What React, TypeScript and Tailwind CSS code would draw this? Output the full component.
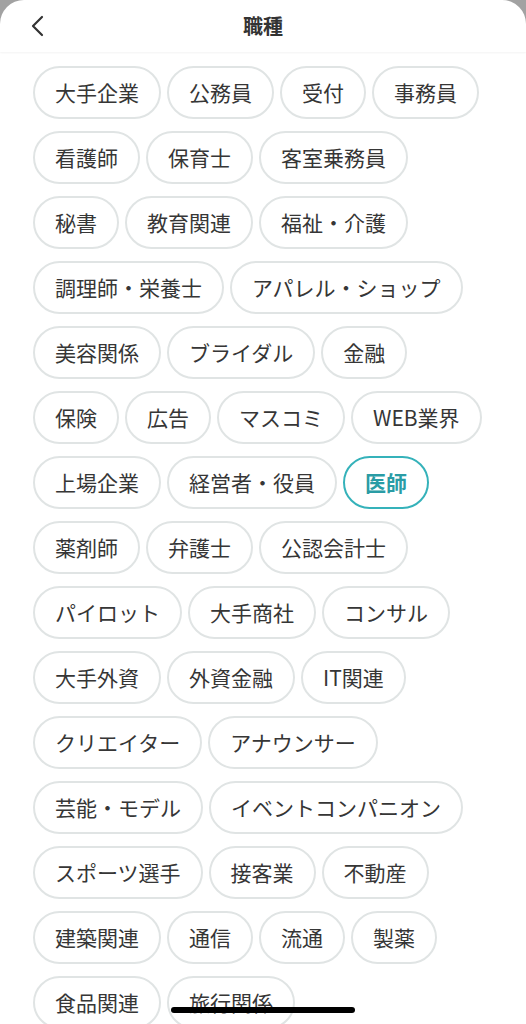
import { useState } from 'react';

const JOBS = [
  '大手企業', '公務員', '受付', '事務員',
  '看護師', '保育士', '客室乗務員',
  '秘書', '教育関連', '福祉・介護',
  '調理師・栄養士', 'アパレル・ショップ',
  '美容関係', 'ブライダル', '金融',
  '保険', '広告', 'マスコミ', 'WEB業界',
  '上場企業', '経営者・役員', '医師',
  '薬剤師', '弁護士', '公認会計士',
  'パイロット', '大手商社', 'コンサル',
  '大手外資', '外資金融', 'IT関連',
  'クリエイター', 'アナウンサー',
  '芸能・モデル', 'イベントコンパニオン',
  'スポーツ選手', '接客業', '不動産',
  '建築関連', '通信', '流通', '製薬',
  '食品関連', '旅行関係',
];

export default function App() {
  const [selected, setSelected] = useState('医師');

  return (
    <div
      className="relative h-[1024px] overflow-hidden bg-[#a2a2a2]"
      style={{ fontFamily: '"Noto Sans CJK JP", "Noto Sans", sans-serif' }}
    >
      <div className="h-full rounded-t-[24px] bg-white">
        <header className="relative flex h-[52px] items-center justify-center shadow-[0_1px_2px_rgba(0,0,0,0.05)]">
          <button className="absolute left-[26px] top-[13px] flex h-[26px] w-[22px] items-center justify-center text-[#333]">
            <svg width="14" height="22" viewBox="0 0 14 22" fill="none">
              <path d="M12 2 L3 11 L12 20" stroke="currentColor" strokeWidth="2.2" strokeLinecap="round" strokeLinejoin="round" />
            </svg>
          </button>
          <h1 className="text-[20px] font-bold leading-none text-[#333]">職種</h1>
        </header>

        <div className="flex flex-wrap gap-x-[6px] gap-y-[12px] px-[33px] pt-[14px]">
          {JOBS.map((job) => {
            const active = job === selected;
            return (
              <button
                key={job}
                onClick={() => setSelected(job)}
                className={`flex h-[53px] items-center rounded-full border-2 px-[20px] text-[21px] leading-none ${
                  active
                    ? 'border-[#35b2ba] font-bold text-[#2a9ca5]'
                    : 'border-[#e0e4e4] text-[#363636]'
                }`}
              >
                {job}
              </button>
            );
          })}
        </div>
      </div>

      <div className="absolute bottom-[11px] left-1/2 h-[6px] w-[184px] -translate-x-1/2 rounded-full bg-black" />
    </div>
  );
}
